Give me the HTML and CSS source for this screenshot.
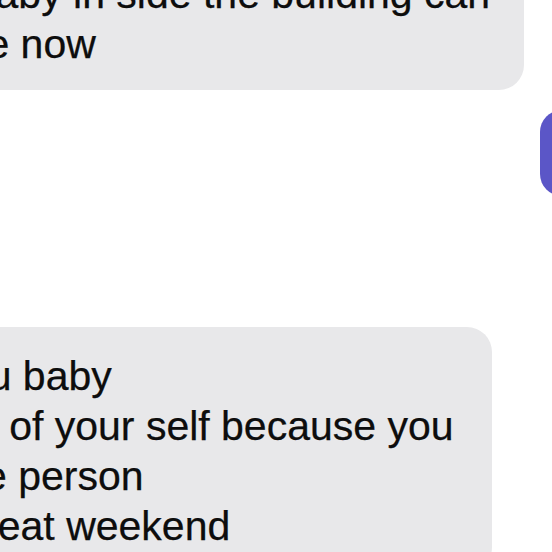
FILE: index.html
```html
<!DOCTYPE html>
<html lang="en">
<head>
  <meta charset="UTF-8" />
  <meta name="viewport" content="width=device-width, initial-scale=1.0"/>
  <title>Messages</title>
  <link rel="stylesheet" href="styles.css">
</head>
<body>
  <div class="thread">
    <!-- incoming -->
    <div class="bubble in first">
      And the baby in side the building can<br>
      go outside now
    </div>

    <!-- outgoing -->
    <div class="bubble out">Ok</div>

    <!-- incoming -->
    <div class="bubble in last">
      Thank you baby<br>
      Take care of your self because you<br>
      are a wise person<br>
      Have a great weekend
    </div>
  </div>
</body>
</html>
```

FILE: styles.css
```css
html, body {
  height: 100%;
}

body {
  margin: 0;
  padding: 0;
  background: #fff;
  font-family: "Liberation Sans", Arial, sans-serif;
  overflow: hidden;
}

.thread {
  display: flex;
  flex-direction: column;
}

/* Bubbles */
.bubble {
  font-size: 41px;
  line-height: 50px;
  padding: 24px 38px 21px 37px;
  border-radius: 25px;
  white-space: nowrap;
}

.bubble.in {
  align-self: flex-start;
  margin-left: -217px;
  background: #e8e8ea;
  color: #0d0d0d;
  -webkit-text-stroke: 0.25px #0d0d0d;
}

.bubble.first {
  margin-top: -55px;
  padding-right: 34px;
}

.bubble.out {
  align-self: flex-end;
  width: 120px;
  margin-top: 20px;
  margin-right: -183px;
  padding-top: 18px;
  padding-bottom: 18px;
  border-radius: 22px;
  background: #5b56c7;
  color: #fff;
}

.bubble.last {
  margin-top: 131px;
}
```
